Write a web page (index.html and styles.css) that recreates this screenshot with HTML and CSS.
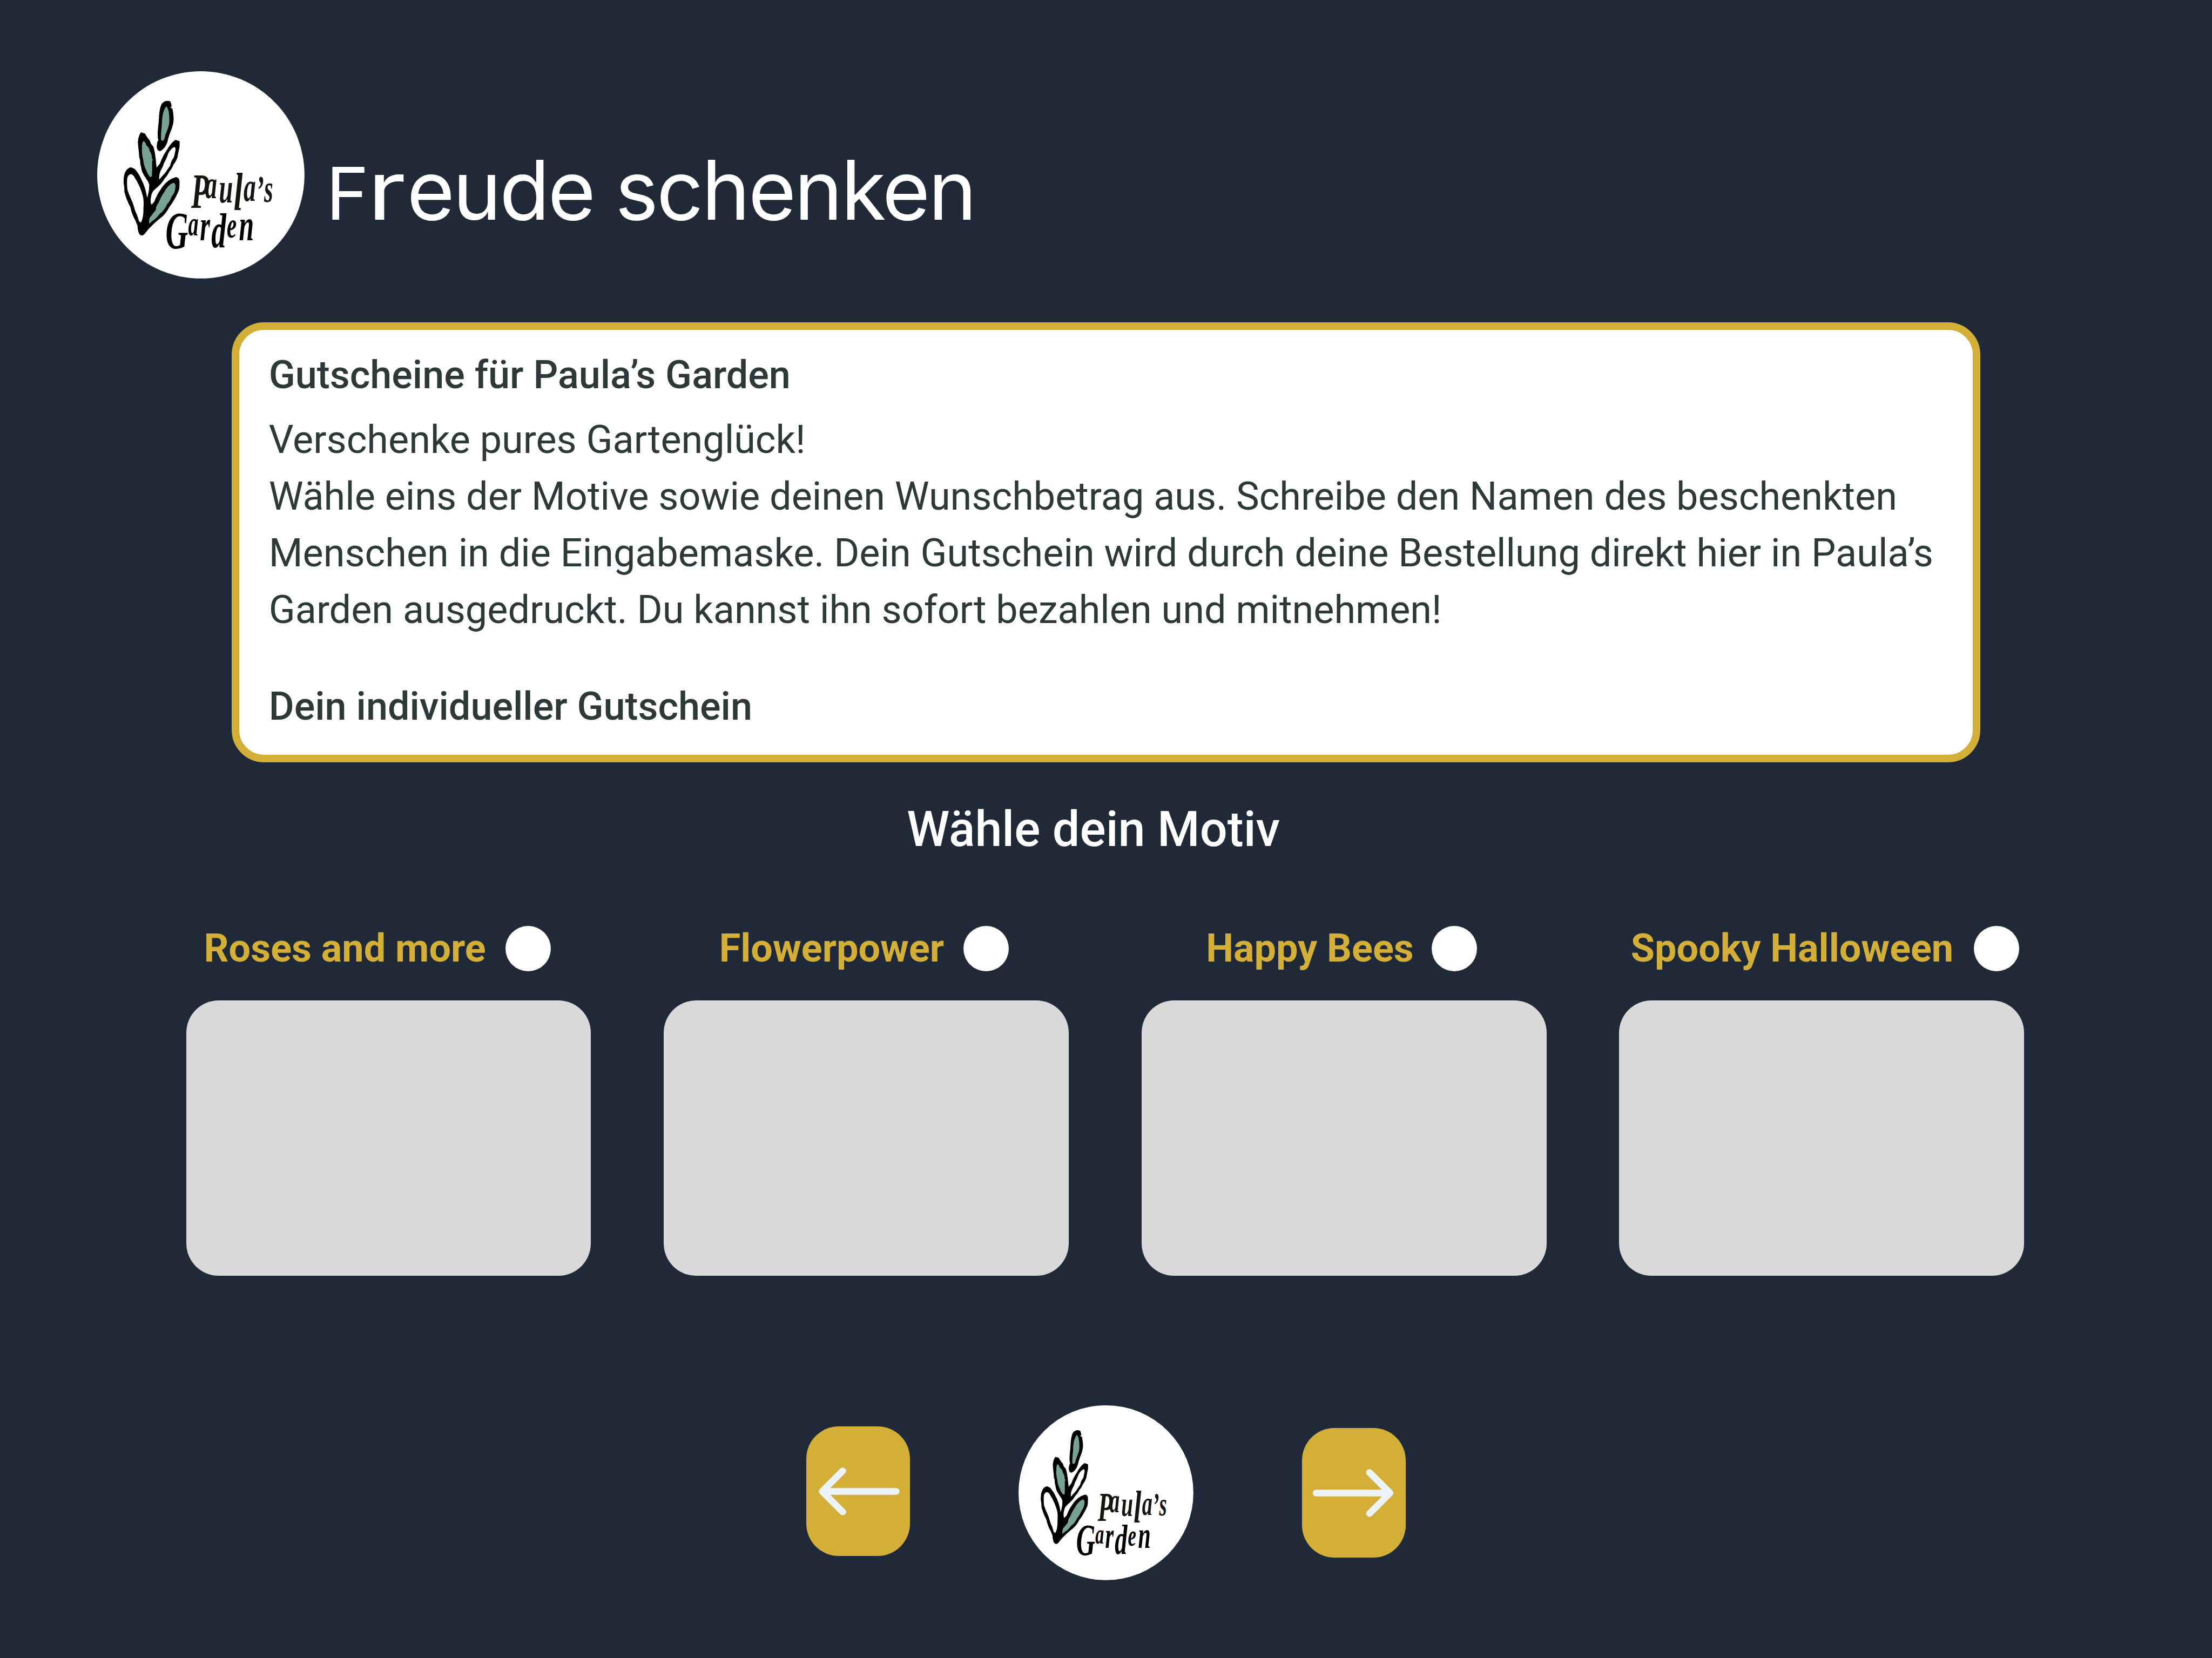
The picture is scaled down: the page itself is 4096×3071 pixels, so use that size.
FILE: index.html
```html
<!DOCTYPE html>
<html lang="de">
<head>
<meta charset="utf-8">
<title>Freude schenken – Paula’s Garden</title>
<link rel="stylesheet" href="styles.css">
</head>
<body>
<header class="header">
  <svg class="header-logo" role="img" aria-label="Paula’s Garden" viewBox="60 66 1152 1152">
    <g id="plant">
    <circle cx="636" cy="642" r="576" fill="#fff"/>
    <path d="M448 230L464 232Q471 240 474 262L466 268L478 274Q484 300 485 330C484 365 472 392 465 408Q455 435 450 460C441 488 420 508 408 510C390 506 388 486 395 458L400 448C392 430 398 380 402 345C404 300 408 262 420 245Q432 231 448 230Z"/>
    <path fill="#76a393" d="M445 261C457 275 461 300 461 345C458 385 440 405 433 445L424 453L415 448C412 420 419 380 420 350C421 310 430 275 445 261Z"/>
    <path fill-rule="evenodd" d="M303 405L325 412Q340 438 352 450L358 468L372 485Q380 510 384 545L390 602L408 580Q425 535 446 506Q470 462 495 447L518 455V485Q510 520 506 545Q496 572 484 585Q474 610 462 622Q448 650 436 660Q420 688 400 705L375 728Q362 742 359 765Q353 795 362 808L378 790Q390 755 410 727Q445 668 498 654Q515 656 517 675Q519 705 514 728Q490 785 460 822Q440 862 408 885Q375 912 348 940L322 972Q312 985 297 975Q285 960 284 925L272 895Q252 860 244 820Q222 780 211 735Q212 710 207 690Q204 640 224 613Q238 600 250 600L270 610Q295 640 308 672Q330 715 337 770Q350 735 349 695Q344 678 330 660Q305 625 304 598Q297 580 299 560Q292 545 292 520Q288 490 286 460Q288 425 303 405Z
      M246 638Q262 640 270 660Q300 705 315 765Q320 790 317 825Q318 880 303 907L292 900Q285 870 270 840Q262 805 250 780Q238 755 228 725Q224 690 227 660Q232 642 246 638Z
      M490 487Q497 490 495 505Q490 530 486 545Q470 565 466 590Q452 610 440 628L405 668Q402 645 412 620Q425 600 432 575Q448 545 455 522Q472 492 490 487Z"/>
    <path fill="#76a393" d="M318 453Q330 462 333 478Q350 490 352 510Q366 530 364 552L370 558L365 565Q366 610 364 650L355 655Q338 635 334 620Q318 590 316 560Q306 520 309 490Q308 460 318 453Z"/>
    <path fill="#76a393" d="M484 686Q496 690 495 705Q494 740 474 762Q464 790 450 803Q430 845 408 858Q390 885 362 902L350 914Q346 900 352 880L385 838Q387 815 401 797Q415 762 430 742Q455 695 484 686Z"/>
    </g>
    <text class="script first" transform="translate(582 0) scale(.6 1)"><tspan y="826" font-size="270">P</tspan><tspan dx="-36" y="771" font-size="222">a</tspan><tspan dx="18" y="795" font-size="232">u</tspan><tspan dx="8" y="838" font-size="300">l</tspan><tspan dx="8" y="787" font-size="228">a</tspan><tspan y="800" font-size="225">’</tspan><tspan y="791" font-size="215">s</tspan></text>
    <text class="script" transform="translate(440 0) scale(.6 1)"><tspan y="1050" font-size="290">G</tspan><tspan dx="0" y="978" font-size="190">a</tspan><tspan dx="14" y="1004" font-size="240">r</tspan><tspan dx="12" y="1044" font-size="275">d</tspan><tspan dx="6" y="990" font-size="205">e</tspan><tspan dx="22" y="1006" font-size="248">n</tspan></text>
  </svg>
  <h1 class="title"><span class="initial">F</span><span class="wide">r</span>eude schenken</h1>
</header>

<main>
  <section class="info">
    <h2>Gutscheine für Paula’s Garden</h2>
    <p>Verschenke pures Gartenglück!<br>Wähle eins der Motive sowie deinen Wunschbetrag aus. Schreibe den Namen des beschenkten<br>Menschen in die Eingabemaske. Dein Gutschein wird durch deine Bestellung direkt hier in Paula’s<br>Garden ausgedruckt. Du kannst ihn sofort bezahlen und mitnehmen!</p>
    <h2>Dein individueller Gutschein</h2>
  </section>

  <h2 class="subtitle">Wähle dein Motiv</h2>

  <section class="motifs">
    <article class="motif">
      <label class="motif-label roses">Roses and more<span class="radio"></span></label>
      <div class="preview"></div>
    </article>
    <article class="motif">
      <label class="motif-label flower">Flowerpower<span class="radio"></span></label>
      <div class="preview"></div>
    </article>
    <article class="motif">
      <label class="motif-label bees">Happy Bees<span class="radio"></span></label>
      <div class="preview"></div>
    </article>
    <article class="motif">
      <label class="motif-label spooky">Spooky Halloween<span class="radio"></span></label>
      <div class="preview"></div>
    </article>
  </section>
</main>

<nav class="nav">
  <a class="nav-button back" aria-label="Zurück"><svg viewBox="0 0 192 240"><path d="M166.500 120.500H30M67.500 82.500L29.500 120.500L67.500 158.500"/></svg></a>
  <svg class="nav-logo" role="img" aria-label="Startseite" viewBox="60 66 1152 1152">
    <use href="#plant"/>
    <text class="script first" transform="translate(582 0) scale(.6 1)"><tspan y="826" font-size="270">P</tspan><tspan dx="-36" y="771" font-size="222">a</tspan><tspan dx="18" y="795" font-size="232">u</tspan><tspan dx="8" y="838" font-size="300">l</tspan><tspan dx="8" y="787" font-size="228">a</tspan><tspan y="800" font-size="225">’</tspan><tspan y="791" font-size="215">s</tspan></text>
    <text class="script" transform="translate(440 0) scale(.6 1)"><tspan y="1050" font-size="290">G</tspan><tspan dx="0" y="978" font-size="190">a</tspan><tspan dx="14" y="1004" font-size="240">r</tspan><tspan dx="12" y="1044" font-size="275">d</tspan><tspan dx="6" y="990" font-size="205">e</tspan><tspan dx="22" y="1006" font-size="248">n</tspan></text>
  </svg>
  <a class="nav-button next" aria-label="Weiter"><svg viewBox="0 0 192 240"><path d="M26 120.500H163M125 82.500L163 120.500L125 158.500"/></svg></a>
</nav>
</body>
</html>
```
FILE: styles.css
```css
/* 1rem is 100 units of the 4098-unit wide layout */
html {
  font-size: calc(100vw / 40.98);
}

* {
  box-sizing: border-box;
  margin: 0;
}

body {
  height: 100vh;
  overflow: hidden;
  background: #202938;
  font-family: Roboto, "Liberation Sans", sans-serif;
  font-size: .72rem;
  color: #2d3938;
}

svg {
  display: block;
}

.script {
  font-family: "Liberation Serif", serif;
  font-style: italic;
  font-weight: 700;
  fill: #000;
}

.first {
  fill: #14150f;
}

.header {
  display: flex;
  align-items: flex-start;
  height: 5.97rem;
  padding: 1.32rem 0 0 1.8rem;
}

.header-logo {
  flex: none;
  width: 3.84rem;
  height: 3.84rem;
}

.title {
  margin: 1.457rem 0 0 .4rem;
  font-family: Inter, sans-serif;
  font-size: 1.52rem;
  font-weight: 400;
  line-height: 1.5rem;
  letter-spacing: -.034rem;
  white-space: nowrap;
  color: #fff;
}

.initial {
  font-size: 1.344rem;
}

.wide {
  display: inline-block;
  margin-right: .2rem;
  transform: scaleX(1.25);
  transform-origin: 0 50%;
}

.info {
  width: 32.4rem;
  height: 8.16rem;
  margin-left: 4.29rem;
  padding: .324rem .5rem 0 .55rem;
  border: .15rem solid #d3af37;
  border-radius: .6rem;
  background: #fff;
  line-height: 1.05rem;
  white-space: nowrap;
}

.info h2 {
  font-size: .72rem;
  font-weight: 500;
}

.info p {
  margin: .148rem 0 .74rem;
}

.subtitle {
  margin: .727rem 0 0 16.8rem;
  font-size: .9rem;
  font-weight: 500;
  line-height: 1.05rem;
  color: #fff;
}

.motifs {
  display: flex;
  gap: 1.35rem;
  margin: 1.253rem 0 0 3.45rem;
}

.motif {
  width: 7.5rem;
}

.motif-label {
  display: flex;
  justify-content: flex-end;
  gap: .36rem;
  margin-bottom: .54rem;
  font-weight: 700;
  line-height: .84rem;
  white-space: nowrap;
  color: #d3af37;
}

.roses {
  padding-right: .75rem;
}

.flower {
  padding-right: 1.11rem;
}

.bees {
  gap: .33rem;
  padding-right: 1.29rem;
}

.spooky {
  gap: .38rem;
  padding-right: .09rem;
}

.radio {
  flex: none;
  width: .84rem;
  height: .84rem;
  border-radius: 50%;
  background: #fff;
}

.preview {
  height: 5.1rem;
  border-radius: .6rem;
  background: #d9d9d9;
}

.nav {
  display: flex;
  align-items: flex-start;
  gap: 2.01rem;
  margin: 2.4rem 0 0 14.94rem;
}

.nav-button {
  width: 1.92rem;
  height: 2.4rem;
  border-radius: .6rem;
  background: #d3af37;
}

.nav-button svg {
  width: 100%;
  height: 100%;
  fill: none;
  stroke: #edf2f7;
  stroke-width: 12.500;
  stroke-linecap: round;
  stroke-linejoin: round;
}

.back {
  margin-top: .39rem;
}

.next {
  margin-top: .42rem;
}

.nav-logo {
  width: 3.24rem;
  height: 3.24rem;
}
```
